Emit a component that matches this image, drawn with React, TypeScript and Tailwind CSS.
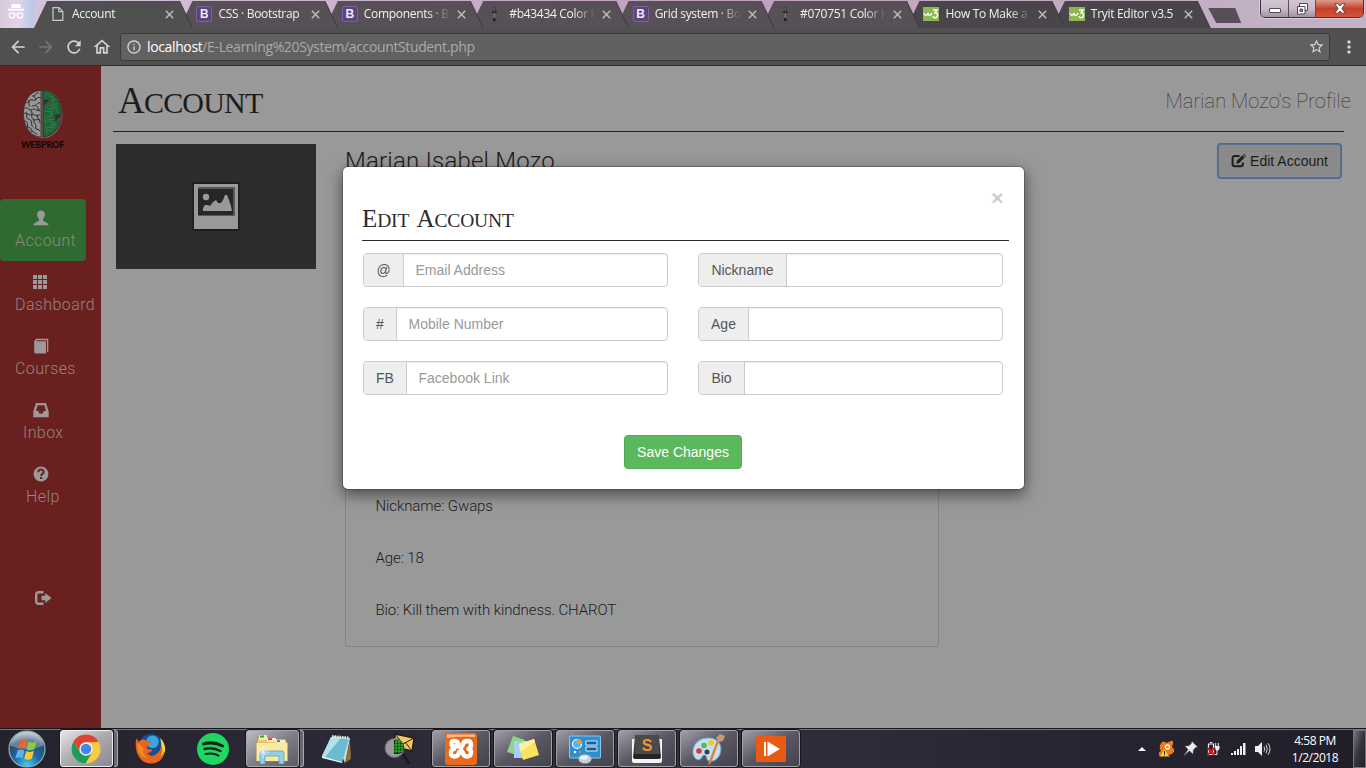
import React from "react";
import {
  MdArrowBack,
  MdArrowForward,
  MdRefresh,
  MdOutlineHome,
  MdInfoOutline,
  MdStarBorder,
  MdMoreVert,
} from "react-icons/md";

/* ---------- Browser chrome ---------- */

function PageIcon() {
  return (
    <svg width="16" height="16" viewBox="0 0 16 16" fill="none" stroke="#c9c9c9" strokeWidth="1.2">
      <path d="M3 1.6h6l3.8 3.8v9H3zM8.8 1.6v4h4" />
    </svg>
  );
}

function BootstrapIcon() {
  return (
    <span className="flex h-4 w-4 items-center justify-center rounded-[2px] border border-[#7b6596] bg-[#5d447f] font-['Liberation_Sans'] text-[12px] font-bold leading-none text-[#efe9f5]">
      B
    </span>
  );
}

function DropperIcon() {
  return (
    <svg width="16" height="16" viewBox="0 0 16 16">
      <rect x="5.8" y="0.8" width="3" height="5" rx="1" fill="#39353a" />
      <rect x="4.6" y="5.6" width="5.4" height="1.4" fill="#2b282c" />
      <rect x="6.2" y="7.2" width="2.2" height="5" fill="#7d787e" stroke="#4a474b" strokeWidth=".5" />
      <rect x="6" y="12" width="2.6" height="3.2" rx=".6" fill="#242225" />
      <rect x="6.6" y="1.4" width="1" height="3.2" fill="#77717a" />
    </svg>
  );
}

function W3Icon() {
  return (
    <svg width="16" height="14" viewBox="0 0 16 14">
      <rect width="16" height="14" fill="#8cb751" />
      <path
        d="M.8 6.300Q1.800 8.600 3.200 8.300 4.800 8 5 5.800 5.200 8.500 6.800 8.300 8.400 8 8.800 6"
        fill="none"
        stroke="#fff"
        strokeWidth="1.300"
      />
      <path d="M10 3h4.200l-2.200 2.800c3.600 0 3.200 5-.2 4.900-1.200 0-1.700-.6-1.900-1.500" fill="none" stroke="#fff" strokeWidth="1.400" />
    </svg>
  );
}

const TABS = [
  { title: "Account", icon: <PageIcon />, z: "z-30" },
  { title: "CSS · Bootstrap", icon: <BootstrapIcon />, z: "z-[17]" },
  { title: "Components · B", icon: <BootstrapIcon />, z: "z-[16]", fade: true },
  { title: "#b43434 Color H", icon: <DropperIcon />, z: "z-[15]", fade: true },
  { title: "Grid system · Bo", icon: <BootstrapIcon />, z: "z-[14]", fade: true },
  { title: "#070751 Color H", icon: <DropperIcon />, z: "z-[13]", fade: true },
  { title: "How To Make a", icon: <W3Icon />, z: "z-[12]", fade: true },
  { title: "Tryit Editor v3.5", icon: <W3Icon />, z: "z-[11]" },
];

function Incognito() {
  return (
    <svg width="18" height="18" viewBox="0 0 18 18" className="shrink-0">
      <path d="M5 1h2.400l1.600.6L10.600 1H13l1.200 4H3.800z" fill="#fff" />
      <rect x="1" y="5.800" width="16" height="1.700" fill="#fff" />
      <circle cx="5" cy="12.500" r="2.600" fill="none" stroke="#fff" strokeWidth="1.300" />
      <circle cx="13" cy="12.500" r="2.600" fill="none" stroke="#fff" strokeWidth="1.300" />
      <path d="M7.600 12q1.400-.9 2.800 0" fill="none" stroke="#fff" />
    </svg>
  );
}

function TabStrip() {
  return (
    <div className="flex h-7 items-start bg-linear-to-r from-[#d5c6dc] via-[#c0a0bd] to-[#c3b3c6]">
      <div className="flex h-7 w-[34px] shrink-0 items-center bg-linear-to-r from-[#d9c9dc] via-[#e3d3e8] to-[#b4cbe6] pb-1 pl-[7px]">
        <Incognito />
      </div>
      {TABS.map((t, i) => (
        <div key={t.title} className={`${t.z} relative mr-[-12.6px] w-[158px] shrink-0 pt-px drop-shadow-[1px_0_0_#3f3a40]`}>
          <div
            className={`flex h-[27px] items-center pb-px [clip-path:polygon(13px_0,145px_0,158px_100%,0_100%)] ${
              i === 0 ? "bg-[#505050] pl-4" : i > 5 ? "bg-[#4a454b] pl-[17px]" : "bg-[#575157] pl-[17px]"
            }`}
          >
            <span className="flex w-[22px] shrink-0 items-center">{t.icon}</span>
            <span
              className={`w-[92px] whitespace-nowrap font-['Open_Sans',sans-serif] text-[12px] leading-4 tracking-[-0.3px] text-[#f2f0f2] ${
                t.fade ? "[mask-image:linear-gradient(to_right,black_70%,transparent_94%)]" : ""
              }`}
            >
              {t.title}
            </span>
            <svg width="9" height="9" viewBox="0 0 9 9" className="ml-px shrink-0" stroke="#bdbabd" strokeWidth="1.500">
              <path d="M.8.8l7.400 7.400M8.200.8L.8 8.200" />
            </svg>
          </div>
        </div>
      ))}
      <div className="ml-[11px] mt-[8px] h-[15px] w-[33px] shrink-0 bg-[#574e58] [clip-path:polygon(0_0,27px_0,100%_100%,8px_100%)]" />
      <div className="ml-[19px] flex h-[18px] w-[104px] shrink-0 overflow-hidden rounded-b-[5px] border border-t-0 border-[#3d3540] shadow-[0_0_0_1px_rgba(255,255,255,0.35)]">
        <div className="flex w-[28px] items-end justify-center border-r border-[#5a4f5c] bg-linear-to-b from-[#d4c6d3] via-[#c9bac9] to-[#a58fa6] pb-1">
          <span className="h-[5px] w-3 rounded-[1px] border border-[#4d4a58] bg-white" />
        </div>
        <div className="flex w-[27px] items-center justify-center border-r border-[#5a4f5c] bg-linear-to-b from-[#d4c6d3] via-[#c9bac9] to-[#a58fa6]">
          <svg width="13" height="12" viewBox="0 0 13 12" fill="#fff" stroke="#4d4a58">
            <path d="M3.500.5h8v7h-8z" />
            <path d="M1.500 3.500h7.500v7.500H1.500z" />
            <path d="M4 6h2.500v2.500H4z" fill="#a595a8" />
          </svg>
        </div>
        <div className="flex flex-1 items-center justify-center bg-linear-to-b from-[#dc9a8d] via-[#c4402a] to-[#d3553a]">
          <svg width="12" height="11" viewBox="0 0 12 11" fill="#fff" stroke="#54404a" strokeWidth=".9">
            <path d="M.8.800h3.400L6 3l1.800-2.200h3.400L7.900 5.500l3.300 4.700H7.800L6 8l-1.800 2.200H.8l3.300-4.700z" />
          </svg>
        </div>
      </div>
    </div>
  );
}

function Toolbar() {
  return (
    <div className="flex h-[38px] items-center border-b border-[#2c2c2c] bg-[#505050] text-[#d3d3d3]">
      <MdArrowBack className="ml-2 h-5 w-5 shrink-0" />
      <MdArrowForward className="ml-2 h-5 w-5 shrink-0 text-[#747474]" />
      <MdRefresh className="ml-[8px] h-5 w-5 shrink-0" />
      <MdOutlineHome className="ml-[8px] h-5 w-5 shrink-0" />
      <div className="ml-2 flex h-[28px] w-[1210px] shrink-0 items-center rounded-[3px] border border-[#3b3b3b] bg-[#616161] font-['Open_Sans',sans-serif] text-[14px]">
        <MdInfoOutline className="ml-[5px] h-4 w-4 shrink-0" />
        <div className="ml-[5px] flex-1 whitespace-nowrap leading-5 tracking-[-0.37px] text-[#aaaaaa]">
          <span className="text-white">localhost</span>/E-Learning%20System/accountStudent.php
        </div>
        <MdStarBorder className="mr-[4px] h-[17px] w-[17px]" />
      </div>
      <MdMoreVert className="ml-[9px] h-5 w-5 shrink-0" />
    </div>
  );
}

/* ---------- Sidebar ---------- */

const glyph = "block h-4 w-4 fill-[#9b9999]";

function UserGlyph() {
  return (
    <svg viewBox="0 0 16 16" className={glyph}>
      <path d="M8 .6c-2.400 0-3.900 1.700-3.900 4 0 1.900.9 3.600 2 4.500v1.300C4.800 11.600.6 12.600.3 15.300h15.400c-.3-2.700-4.500-3.700-5.800-4.900V9.100c1.100-.9 2-2.600 2-4.500 0-2.300-1.500-4-3.900-4z" />
    </svg>
  );
}
function GridGlyph() {
  return (
    <svg viewBox="0 0 16 16" className={glyph}>
      <path d="M1 1h4v4H1zM6 1h4v4H6zM11 1h4v4h-4zM1 6h4v4H1zM6 6h4v4H6zM11 6h4v4h-4zM1 11h4v4H1zM6 11h4v4H6zM11 11h4v4h-4z" />
    </svg>
  );
}
function BookGlyph() {
  return (
    <svg viewBox="0 0 16 16" className={glyph}>
      <path d="M1.200 3 3.200.8H15.300v12.500l-1.300 1V2.300H4l-.9.900h9.900V15.500H2.200l-1-1z" />
    </svg>
  );
}
function InboxGlyph() {
  return (
    <svg viewBox="0 0 16 16" className={glyph}>
      <path fillRule="evenodd" d="M3 1h10l2.700 8.500v5.700H.3V9.500zM4.700 3.200 3 9h2.400l.8 2.400h3.600L10.600 9H13l-1.700-5.800z" />
    </svg>
  );
}
function HelpGlyph() {
  return (
    <svg viewBox="0 0 16 16" className={glyph}>
      <circle cx="8" cy="8" r="7.400" />
      <path d="M5.300 6.200c0-3.600 5.500-3.300 5.400-.3 0 1.900-2.600 1.900-2.600 4" fill="none" stroke="#6b2020" strokeWidth="2" />
      <path d="M7 11h2.200v2H7z" fill="#6b2020" />
    </svg>
  );
}

const NAV = [
  { label: "Account", icon: <UserGlyph />, pad: "pl-[15px]", ipad: "pl-[33px]", active: true },
  { label: "Dashboard", icon: <GridGlyph />, pad: "pl-[15px]", ipad: "pl-[32px]" },
  { label: "Courses", icon: <BookGlyph />, pad: "pl-[15px]", ipad: "pl-[33px]" },
  { label: "Inbox", icon: <InboxGlyph />, pad: "pl-[23px]", ipad: "pl-[32.500px]" },
  { label: "Help", icon: <HelpGlyph />, pad: "pl-[26px]", ipad: "pl-[32.500px]" },
];

function BrainLogo() {
  return (
    <svg width="44" height="51" viewBox="0 0 44 52">
      <path d="M21 2C10 0 3 12 2 24c-1 12 6 25 18 26h3C35 50 42 37 42 26 42 13 34 1 23 1z" fill="#8d7777" opacity=".7" />
      <path d="M20 1.500C9 1 2 13 2 25s7 24 18 24z" fill="#969696" stroke="#292525" strokeWidth=".8" />
      <path d="M22 1.500C33 1 41 13 41 25S34 48 22 49z" fill="#1c6636" stroke="#203226" strokeWidth=".8" />
      <g fill="none" stroke="#292626" strokeWidth="1">
        <path d="M18 4c-5-1-3 5-7 3M20 9c-5-2-5 4-9 2-3-1-4 4-6 3M19 14c-4 0-3 4-8 3M3 20c4-3 4 3 8 1s4 3 8 0M2 26c3-4 5 2 8 0s4 4 9 0M5 24c1 4-1 6 3 7s1 6 4 8M10 22c2 4-1 6 2 9 3 2 5-2 7 1M3 33c3-1 4 3 3 6 2 1 4-1 4 4 3-1 3 3 6 3M13 31c-2 4 4 5 1 9 2 2 4 0 5 3M15 17c3 2 1 4 4 6M7 11c2 3-1 4 2 7M13 6c-1 3 3 3 1 6M16 26c0 4 2 3 3 9" />
      </g>
      <g fill="none" stroke="#46775a" strokeWidth=".8">
        <path d="M24 5h5v3h4M26 20h8v-5h4M24 23h6v5h-5M31 20v8M24 33h7v6h-7M27 42h4v-6h5M26 46v-6M34 34v6M24 28v8M32 9v8h-6M30 11h6M27 31h7M36 18v6" />
      </g>
      <path d="M22.500 11h6v6h-6zM34.500 26h6.500v7h-6.500z" fill="#4d4d4d" />
      <path d="M22.500 11h6l-6 6zM34.500 26h6.500l-6.500 7z" fill="#303030" />
    </svg>
  );
}

function Sidebar() {
  return (
    <nav className="flex w-[101px] shrink-0 flex-col bg-[#6b2020]">
      <div className="flex h-[133px] flex-col items-start pl-[21px] pt-[23px]">
        <BrainLogo />
        <span className="font-['Lato',sans-serif] text-[9px] font-black leading-[9px] tracking-[-0.2px] text-[#120808]">
          WEBPROF
        </span>
      </div>
      {NAV.map((n) => (
        <div key={n.label} className={`mb-0.5 flex h-[62px] shrink-0 flex-col pt-[11px] ${n.active ? "w-[86px] rounded-[4px] bg-[#2f6b30]" : ""}`}>
          <div className={n.ipad}>{n.icon}</div>
          <div className={`${n.pad} mt-[3px] font-['Roboto',sans-serif] text-[16px] font-light leading-[23px] tracking-[0.4px] text-[#948480]`}>
            {n.label}
          </div>
        </div>
      ))}
      <svg viewBox="0 0 18 16" className="ml-[34px] mt-[71px] h-4 w-[18px] shrink-0">
        <path d="M9.500 2.200H4.600Q2.200 2.200 2.200 4.600v6.800q0 2.400 2.400 2.400h4.900" fill="none" stroke="#9b9999" strokeWidth="2.400" />
        <path d="M7.500 5.800h3.800V3l6.200 5-6.200 5v-2.800H7.500z" fill="#9b9999" />
      </svg>
    </nav>
  );
}

/* ---------- Page ---------- */

function ProfilePicture() {
  return (
    <div className="flex h-[125px] w-[200px] shrink-0 items-center justify-center bg-[#2d2d2d]">
      <svg width="48" height="50" viewBox="0 0 48 50">
        <rect x=".5" width="47" height="49" rx="1" fill="#1c1e1e" />
        <rect x="2" y="2" width="44" height="45" fill="#999" />
        <rect x="6" y="5" width="37" height="29" fill="#575757" />
        <rect x="6" y="7" width="35" height="26" fill="#262626" />
        <circle cx="14" cy="15" r="3.200" fill="#999" />
        <path d="M11 29v-3l2-3h3l2 1 3-4 3-2 2 3h3l2-3 2-5h2l2 5 2 6 1 5z" fill="#999" />
      </svg>
    </div>
  );
}

function EditGlyph() {
  return (
    <svg width="15" height="14" viewBox="0 0 15 14">
      <path d="M8.500 2H3.800Q1.600 2 1.600 4.200v5.900q0 2.200 2.200 2.200h5.900q2.200 0 2.200-2.200V8.500" fill="none" stroke="#1f1f1f" strokeWidth="2" />
      <path d="M5.300 9.800l.6-3L11.300 1.200l2.300 2.200-5.400 5.700zM12 .6l1-.6 1.900 1.900-.7 1z" fill="#1f1f1f" />
    </svg>
  );
}

function Page() {
  return (
    <main className="flex min-w-0 flex-1 flex-col bg-[#999999] text-[#1c1c1c]">
      <header className="ml-3 mr-[22px] flex h-[66px] items-start justify-between border-b-[1.500px] border-[#1f1f1f]">
        <h1 className="ml-[5px] mt-[15px] whitespace-nowrap font-['Liberation_Serif',serif] text-[30px] leading-10 tracking-[-0.8px]">
          <span className="text-[37px]">A</span>CCOUNT
        </h1>
        <span className="mr-[-7px] mt-[21px] whitespace-nowrap font-['Roboto',sans-serif] text-[20px] font-thin leading-7 tracking-[0.1px] text-[#2c2c2c]">
          Marian Mozo's Profile
        </span>
      </header>
      <div className="flex flex-1 items-start pl-[15px] pt-[12px]">
        <ProfilePicture />
        <section className="ml-[29px] flex h-[503px] w-[594px] flex-col">
          <h2 className="whitespace-nowrap font-['Roboto',sans-serif] text-[24px] font-light leading-[35px] tracking-[0.2px]">Marian Isabel Mozo</h2>
          <div className="mt-[15px] flex flex-1 flex-col justify-end rounded-[4px] border border-[#858585] pb-[10px] pl-[29.500px] font-['Roboto',sans-serif] text-[15px] font-light leading-[52px] tracking-[-0.1px]">
            <p>Nickname: Gwaps</p>
            <p>Age: 18</p>
            <p>Bio: Kill them with kindness. CHAROT</p>
          </div>
        </section>
        <button className="ml-[279px] flex h-[34px] w-[123px] items-center justify-center gap-1 rounded-[3px] border border-[#5c6f95] bg-[#8a8a8a] font-['Liberation_Sans',sans-serif] text-[14px] shadow-[0_0_0_1px_#4667a0]">
          <EditGlyph />
          Edit Account
        </button>
      </div>
    </main>
  );
}

/* ---------- Modal ---------- */

function Field({ label, width, placeholder }: { label: string; width: string; placeholder?: string }) {
  return (
    <label className="flex h-[34px] w-[305px] overflow-hidden rounded-[4px] border border-[#cccccc] bg-white text-[14px] shadow-[inset_0_1px_1px_rgba(0,0,0,0.075)]">
      <span className={`${width} flex shrink-0 items-center justify-center border-r border-[#cccccc] bg-[#eeeeee] text-[#555555]`}>{label}</span>
      <input className="min-w-0 flex-1 bg-transparent px-[11.500px] text-[#555555] outline-none placeholder:text-[#999999]" placeholder={placeholder} />
    </label>
  );
}

function EditModal() {
  return (
    <div className="absolute left-[342px] top-[166px] z-50 flex h-[324px] w-[683px] flex-col rounded-[6px] border border-black/20 bg-white bg-clip-padding pl-5 pr-[15px] font-['Liberation_Sans',sans-serif] shadow-[0_5px_15px_rgba(0,0,0,0.5)]">
      <button className="mr-[5.500px] mt-[20px] h-[21px] self-end text-[21px] font-bold leading-[21px] text-[#cccccc]">×</button>
      <div className="-ml-px h-[33px] border-b-[1.500px] border-[#2c2c2c]">
        <h2 className="whitespace-nowrap font-['Liberation_Serif',serif] text-[19.500px] leading-[21px] tracking-[-0.15px] text-[#2b2b2b]">
          <span className="text-[25px]">E</span>DIT{" "}
          <span className="ml-[3px] text-[25px]">A</span>CCOUNT
        </h2>
      </div>
      <div className="mt-3 grid grid-cols-[305px_305px] gap-x-[30px] gap-y-5">
        <Field label="@" width="w-[40px]" placeholder="Email Address" />
        <Field label="Nickname" width="w-[88px]" />
        <Field label="#" width="w-[33px]" placeholder="Mobile Number" />
        <Field label="Age" width="w-[50px]" />
        <Field label="FB" width="w-[43px]" placeholder="Facebook Link" />
        <Field label="Bio" width="w-[46px]" />
      </div>
      <button className="ml-[261px] mt-10 h-[34px] w-[118px] rounded-[4px] border border-[#4cae4c] bg-[#5cb85c] text-[14px] text-white">
        Save Changes
      </button>
    </div>
  );
}

/* ---------- Taskbar ---------- */

function StartOrb() {
  return (
    <svg width="40" height="38" viewBox="0 0 40 38" className="shrink-0">
      <defs>
        <radialGradient id="orb" cx=".5" cy=".95" r=".9">
          <stop offset="0" stopColor="#3fd0f5" />
          <stop offset=".4" stopColor="#1c6aa6" />
          <stop offset=".75" stopColor="#2a4f70" />
          <stop offset="1" stopColor="#a9bcc9" />
        </radialGradient>
      </defs>
      <circle cx="20" cy="19" r="18" fill="url(#orb)" stroke="#93a8b6" strokeWidth="1.200" />
      <path d="M4 16a16 14 0 0 1 32 0q-16 6-32 0z" fill="#fff" opacity=".28" />
      <path d="M13 11q4-2.500 7 0l-2 8q-3-2-7 0z" fill="#ef6229" />
      <path d="M21.500 11.500q4 2.200 8-.2l-2.200 8q-4 2.200-7.600.2z" fill="#91c83e" />
      <path d="M10.500 20.500q4-2 7 0l-2 8q-3-2-7.200 0z" fill="#59b4ec" />
      <path d="M19.200 21q4 2.200 7.800-.2l-2.200 8q-4 2-7.600 0z" fill="#fcc938" />
    </svg>
  );
}

function ChromeIcon() {
  return (
    <svg width="30" height="30" viewBox="0 0 30 30">
      <circle cx="15" cy="15" r="14.500" fill="#fbca3e" />
      <path d="M2.400 7.800A14.500 14.500 0 0 1 27.600 7.800L15 8.500 9 18.500z" fill="#db4437" />
      <path d="M2.400 7.800A14.500 14.500 0 0 0 14.500 29.500l6.500-11-12 0z" fill="#1b9c58" />
      <circle cx="15" cy="15" r="6.700" fill="#f4f4f4" />
      <circle cx="15" cy="15" r="5.300" fill="#4285f4" />
    </svg>
  );
}

function FirefoxIcon() {
  return (
    <svg width="31" height="31" viewBox="0 0 32 32">
      <circle cx="16.500" cy="14" r="13" fill="#14508f" />
      <circle cx="18" cy="9" r="6.500" fill="#3aa5de" />
      <path d="M26 5q7 8 4.500 15-3 10-13 11 13-7 8.500-26z" fill="#f9cf3c" />
      <path d="M2 5q0 3 2 4 3-3 6-2l3 1.500 4 .5q-1 3-4 3.500-1 2 0 4 2.500 0 5 1-2 4-6 3 4 5 9 2 6-4 6-9 3 5-1 11 3-2 4-6 0 9-9 12.500-9 2-15-4Q1 21 1 15 0 9 2 5z" fill="#e8651b" />
      <path d="M3 10q-2 12 9 16-5-6-3-10z" fill="#f28c25" />
    </svg>
  );
}

function SpotifyIcon() {
  return (
    <svg width="32" height="32" viewBox="0 0 32 32">
      <circle cx="16" cy="16" r="16" fill="#1ed760" />
      <g fill="none" stroke="#1b2420" strokeLinecap="round">
        <path d="M6.500 11q10-3 19 2" strokeWidth="3" />
        <path d="M7.500 16q8.500-2.300 16 2" strokeWidth="2.500" />
        <path d="M8.500 21q7.500-1.700 13 1.600" strokeWidth="2" />
      </g>
    </svg>
  );
}

function ExplorerIcon() {
  return (
    <svg width="34" height="30" viewBox="0 0 34 30">
      <path d="M2 6l2-4h8l2 3h16l2 3v19H2z" fill="#e8c66a" stroke="#9f7f32" strokeWidth=".6" />
      <path d="M4 1h8v5H4z" fill="#f3e7b5" />
      <path d="M5 1.500h4v2H5z" fill="#2aa534" />
      <path d="M12 4h9v4h-9z" fill="#f6edc4" />
      <path d="M13 4.200h4v1.800h-4z" fill="#d33a2a" />
      <path d="M21 6h9v4h-9z" fill="#f6edc4" />
      <path d="M22 6.200h3v1.800h-3z" fill="#2b7fd1" />
      <path d="M1.500 9h31v18h-31z" fill="#fbe9a0" />
      <path d="M5 30V19q0-2 2-2h20q2 0 2 2v11h-5v-8H10v8z" fill="#8ed0ee" stroke="#4c9cc6" strokeWidth=".7" />
      <path d="M8 12v12M3 18h11M5 15l6 6M11 15l-6 6" stroke="#fff" strokeWidth=".7" />
    </svg>
  );
}

function NotepadIcon() {
  return (
    <svg width="32" height="30" viewBox="0 0 32 30">
      <path d="M29 6l1 19-6 4z" fill="#8b7340" />
      <path d="M12 2l17 2-5 25z" fill="#d9d9cf" />
      <path d="M10 3l18 1-7 25L1 22z" fill="#69bcd2" />
      <path d="M10 3l10 1L4 23l-3-1z" fill="#b4e2ea" />
      <path d="M1 22l20 6v1L1 24z" fill="#ecf7f7" />
      <path d="M11 2.500l17 1.500" stroke="#e5e5e5" strokeWidth="3" strokeDasharray="1.500 1" />
    </svg>
  );
}

function MailSearchIcon() {
  return (
    <svg width="32" height="34" viewBox="0 0 32 34">
      <path d="M12 2l19 4-2 13-17-4z" fill="#f5c662" stroke="#231c10" strokeWidth="1.300" />
      <path d="M12 2l8 10 11-6M12 15l6-6M29 19l-7-9" fill="none" stroke="#231c10" />
      <path d="M20 22l6 10" stroke="#19191c" strokeWidth="2.500" />
      <circle cx="11.500" cy="16" r="9.500" fill="#9a9a9e" stroke="#67676c" />
      <path d="M11 8q9-1 10 6 1 6-5 8h-5z" fill="#152613" />
      <path d="M12 10h7M11 13h10M11 16h10M11 19h9M13 8v13M16 8v13M19 10v10" stroke="#2ccf2c" strokeWidth=".9" />
    </svg>
  );
}

function XamppIcon() {
  return (
    <svg width="32" height="32" viewBox="0 0 32 32">
      <rect width="32" height="32" rx="3" fill="#e86a1a" />
      <path d="M2 1.500h28V4Q16 3 2 5z" fill="#fbb98a" />
      <g fill="none" stroke="#fff" strokeWidth="4.400" strokeLinecap="round" strokeLinejoin="round">
        <path d="M12 13.500H9.500Q6.500 13.500 6.500 10.500T9.500 8q3.500 0 4 4.500h4Q18 8 22.500 8q3.500 0 3.500 3.500T23.500 16q3 .5 2.500 4t-4 3.500-4.500-4.500h-3.500q-.5 4.500-4.500 4.500t-3.500-4T9 16" />
        <path d="M16 13v6" />
      </g>
    </svg>
  );
}

function NotesIcon() {
  return (
    <svg width="34" height="28" viewBox="0 0 34 28">
      <path d="M7 1l12 4-6 16L1 17z" fill="#8ed586" />
      <path d="M8 6l14 0 0 17H8z" fill="#a7d1f4" />
      <path d="M13 9l15-5 5 16-16 5z" fill="#fae25f" />
      <path d="M13 9l15-5 1 3-15 10z" fill="#fdf19b" />
    </svg>
  );
}

function ControlPanelIcon() {
  return (
    <svg width="34" height="30" viewBox="0 0 34 30">
      <rect x="1.500" y="2" width="31" height="22" rx="1" fill="#2b8fd2" stroke="#8cc7ed" />
      <circle cx="9" cy="10" r="4.500" fill="#56b5ea" stroke="#fff" strokeWidth="1.200" />
      <path d="M9 10V5q5 0 5 5z" fill="#f29b26" />
      <path d="M18 7h11v4H18zM18 13h11v4H18z" fill="#1d5e98" stroke="#d5ecfa" />
      <circle cx="7" cy="18" r="1.300" fill="#fff" />
      <circle cx="12" cy="18" r="1.300" fill="#f2792a" />
      <ellipse cx="17" cy="25" rx="6.500" ry="4.500" fill="#c9ced2" />
      <ellipse cx="16" cy="23.500" rx="4" ry="2" fill="#eef1f3" />
    </svg>
  );
}

function SublimeIcon() {
  return (
    <svg width="32" height="28" viewBox="0 0 32 28">
      <path d="M1 4h30v22q0 2-2 2H3q-2 0-2-2z" fill="#f3f3f3" />
      <path d="M4 2q0-2 2-2h20q2 0 2 2l2 21-2 1H4l-2-1z" fill="#252525" />
      <path d="M4 2q0-2 2-2h20q2 0 2 2l.5 17h-25z" fill="#4a4a4a" />
      <text x="16" y="16" textAnchor="middle" fontFamily="Liberation Sans" fontWeight="700" fontSize="16" fill="#f29432">S</text>
    </svg>
  );
}

function PaintIcon() {
  return (
    <svg width="34" height="32" viewBox="0 0 34 32">
      <path d="M18 5C7 4 0 12 1 20c1 7 7 9 9 4 2-4 5-1 5 2 1 4 10 3 13-5 3-9-2-15-10-16z" fill="#c2e0f2" stroke="#6facd2" />
      <circle cx="7" cy="18" r="2.800" fill="#de3434" />
      <circle cx="12" cy="12.500" r="2.800" fill="#59b947" />
      <circle cx="19" cy="10" r="2.900" fill="#f4c533" />
      <circle cx="15" cy="19" r="2.500" fill="#273f63" />
      <path d="M28 6l-9 24-3 2 1-4L26 5z" fill="#e0812d" />
      <path d="M24 5l4-4 5 2-2 5-4 1z" fill="#c69a72" />
    </svg>
  );
}

function PlayIcon() {
  return (
    <svg width="30" height="26" viewBox="0 0 30 26">
      <rect width="30" height="26" rx="1" fill="#e95a13" />
      <path d="M8 6h2v14H8zM11.500 5.500L24 13l-12.500 7.500z" fill="#fff" />
    </svg>
  );
}

const APPS = [
  { name: "chrome", icon: <ChromeIcon />, kind: "active" },
  { name: "firefox", icon: <FirefoxIcon />, kind: "pinned" },
  { name: "spotify", icon: <SpotifyIcon />, kind: "pinned" },
  { name: "explorer", icon: <ExplorerIcon />, kind: "stack" },
  { name: "notepad", icon: <NotepadIcon />, kind: "pinned" },
  { name: "mail", icon: <MailSearchIcon />, kind: "pinned" },
  { name: "xampp", icon: <XamppIcon />, kind: "open" },
  { name: "notes", icon: <NotesIcon />, kind: "open" },
  { name: "panel", icon: <ControlPanelIcon />, kind: "open" },
  { name: "sublime", icon: <SublimeIcon />, kind: "open" },
  { name: "paint", icon: <PaintIcon />, kind: "open" },
  { name: "player", icon: <PlayIcon />, kind: "open" },
];

function AppSlot({ icon, kind }: { icon: React.ReactNode; kind: string }) {
  if (kind === "pinned") {
    return <div className="flex w-[58px] shrink-0 items-center justify-center pr-px">{icon}</div>;
  }
  if (kind === "open") {
    return (
      <div className="flex w-[58px] shrink-0 items-center justify-center rounded-[3px] border border-[#a19fa8] bg-linear-to-br from-[#a09fa7] via-[#595762] to-[#44424e] shadow-[0_0_0_1px_#17161d]">
        {icon}
      </div>
    );
  }
  return (
    <div className="flex w-[58px] shrink-0">
      <div
        className={`flex w-[53px] items-center justify-center rounded-[3px] border pr-[2px] shadow-[0_0_0_1px_#17161d] ${
          kind === "active"
            ? "border-[#eeeeef] bg-linear-to-br from-[#e6e5e8] via-[#aaa9ae] to-[#8b8991]"
            : "border-[#a7a5ae] bg-linear-to-br from-[#bebdc2] via-[#807e87] to-[#5d5b66]"
        }`}
      >
        {icon}
      </div>
      <div className="ml-px w-1 rounded-r-[3px] border border-l-0 border-[#a7a5ae] bg-[#6a6873]" />
    </div>
  );
}

function Tray() {
  return (
    <div className="ml-auto flex items-center">
      <svg width="8" height="4" viewBox="0 0 8 4" fill="#f3f3f3">
        <path d="M4 0l4 4H0z" />
      </svg>
      <svg width="17" height="17" viewBox="0 0 17 17" className="ml-[12px]">
        <path d="M4 2q3-1 4 1l5-2q3-1 2 3l-1 3q4 3 1 6-3 3-6 1-5 4-8 1-1-3 2-4-3-4 1-9z" fill="#f27a1c" />
        <circle cx="9.500" cy="7" r="2" fill="none" stroke="#fff" strokeWidth="1.300" />
        <path d="M6.500 8.500l5 8h-10z" fill="#f8d52b" stroke="#a36d06" strokeWidth=".5" />
        <path d="M6 11h1v3H6zM6 14.500h1v1H6z" fill="#222" />
      </svg>
      <svg width="15" height="15" viewBox="0 0 15 15" className="ml-[8px]">
        <path d="M9 .5l5.500 5.500-2 .6-2.200 2.400-.4 4-3.400-3.200L1 14.500l4.200-6L2 5.200l4-.4 2.400-2.300z" fill="#ededef" stroke="#707078" strokeWidth=".4" />
      </svg>
      <svg width="15" height="16" viewBox="0 0 15 16" className="ml-[8px]">
        <path d="M2.500 3h5v10.500h-5zM3.800 1.500h2.500" fill="none" stroke="#eee" strokeWidth="1.200" />
        <path d="M8.500 5h5v3l-1.500 1.500h-2z" fill="#eee" />
        <path d="M9.700 2v3M12.300 2v3M11 9v4.500H8" fill="none" stroke="#eee" />
        <path d="M1.500 7l7 7M8.500 7l-7 7" stroke="#e21717" strokeWidth="2.100" />
      </svg>
      <svg width="15" height="12" viewBox="0 0 15 12" className="ml-[10px]" fill="#efefef">
        <path d="M0 10h2v2H0zM3 8h2v4H3zM6 6h2v6H6zM9 3h2v9H9zM12 0h2.500v12H12z" />
      </svg>
      <svg width="16" height="14" viewBox="0 0 16 14" className="ml-[9px]">
        <path d="M0 4h3l4-4v14l-4-4H0z" fill="#f1f1f1" />
        <path d="M9 4.500q1.500 2.500 0 5M11 2.800q2.600 4.200 0 8.400M13 1.200q4 5.800 0 11.600" fill="none" stroke="#d7d7d9" />
      </svg>
      <div className="ml-[18px] w-[52px] text-center font-['Open_Sans',sans-serif] text-[12px] leading-[17px] tracking-[-0.45px] text-white">
        <div className="whitespace-nowrap">4:58 PM</div>
        <div className="whitespace-nowrap">1/2/2018</div>
      </div>
      <div className="ml-[12px] h-[38px] w-[13px] border border-[#75737b] bg-linear-to-br from-[#77757d] via-[#35333d] to-[#22212a]" />
    </div>
  );
}

function Taskbar() {
  return (
    <footer className="flex h-10 border-t border-[#17161c] bg-linear-to-r from-[#23232d] via-[#332f40] to-[#1f1e28]">
      <div className="flex flex-1 border-t border-[#77757e] pb-px">
        <div className="flex w-[60px] shrink-0 items-center pl-[7px]">
          <StartOrb />
        </div>
        <div className="flex gap-1">
          {APPS.map((a) => (
            <AppSlot key={a.name} icon={a.icon} kind={a.kind} />
          ))}
        </div>
        <Tray />
      </div>
    </footer>
  );
}

export default function App() {
  return (
    <div className="relative flex h-[768px] w-[1366px] flex-col overflow-hidden">
      <TabStrip />
      <Toolbar />
      <div className="flex h-[662px] shrink-0">
        <Sidebar />
        <Page />
      </div>
      <EditModal />
      <Taskbar />
    </div>
  );
}
